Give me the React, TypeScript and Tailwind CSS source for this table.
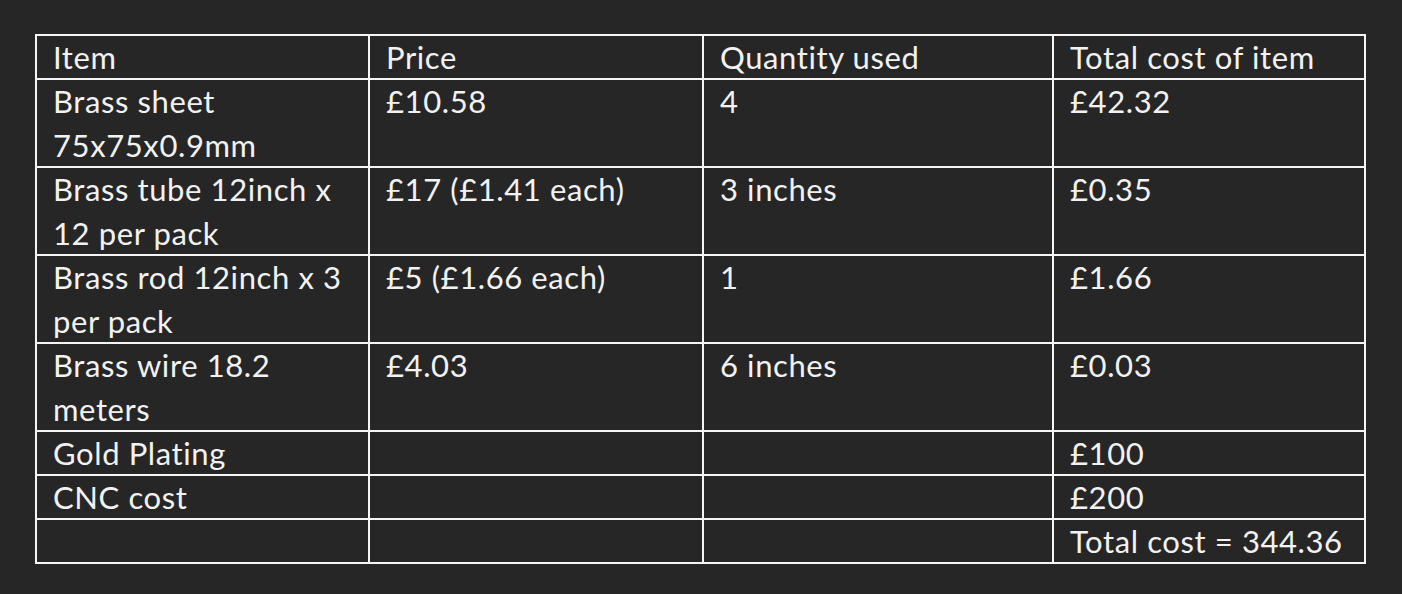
import React from "react";

const rows: { cells: string[][]; h: string }[] = [
  { cells: [["Item"], ["Price"], ["Quantity used"], ["Total cost of item"]], h: "h-[44px]" },
  { cells: [["Brass sheet", "75x75x0.9mm"], ["£10.58"], ["4"], ["£42.32"]], h: "h-[88px]" },
  { cells: [["Brass tube 12inch x", "12 per pack"], ["£17 (£1.41 each)"], ["3 inches"], ["£0.35"]], h: "h-[88px]" },
  { cells: [["Brass rod 12inch x 3", "per pack"], ["£5 (£1.66 each)"], ["1"], ["£1.66"]], h: "h-[88px]" },
  { cells: [["Brass wire 18.2", "meters"], ["£4.03"], ["6 inches"], ["£0.03"]], h: "h-[88px]" },
  { cells: [["Gold Plating"], [""], [""], ["£100"]], h: "h-[44px]" },
  { cells: [["CNC cost"], [""], [""], ["£200"]], h: "h-[44px]" },
  { cells: [[""], [""], [""], ["Total cost = 344.36"]], h: "h-[44px]" },
];

export default function App() {
  return (
    <div
      className="w-[1402px] h-[594px] bg-[#262626] pt-[34px] pl-[35px] text-[#f2f2f2]"
      style={{ fontFamily: "Lato, 'Open Sans', sans-serif" }}
    >
      <div className="w-[1331px] border-l-2 border-t-2 border-[#f5f5f5] grid grid-cols-[333px_334px_350px_312px]">
        {rows.map((r, ri) =>
          r.cells.map((c, ci) => (
            <div
              key={`${ri}-${ci}`}
              className={`${r.h} border-r-2 border-b-2 border-[#f5f5f5] pl-[16px] text-[31px] leading-[42px] tracking-[0.6px] whitespace-nowrap`}
            >
              {c.map((line, li) => (
                <div key={li} className="h-[44px]">{line}</div>
              ))}
            </div>
          ))
        )}
      </div>
    </div>
  );
}
